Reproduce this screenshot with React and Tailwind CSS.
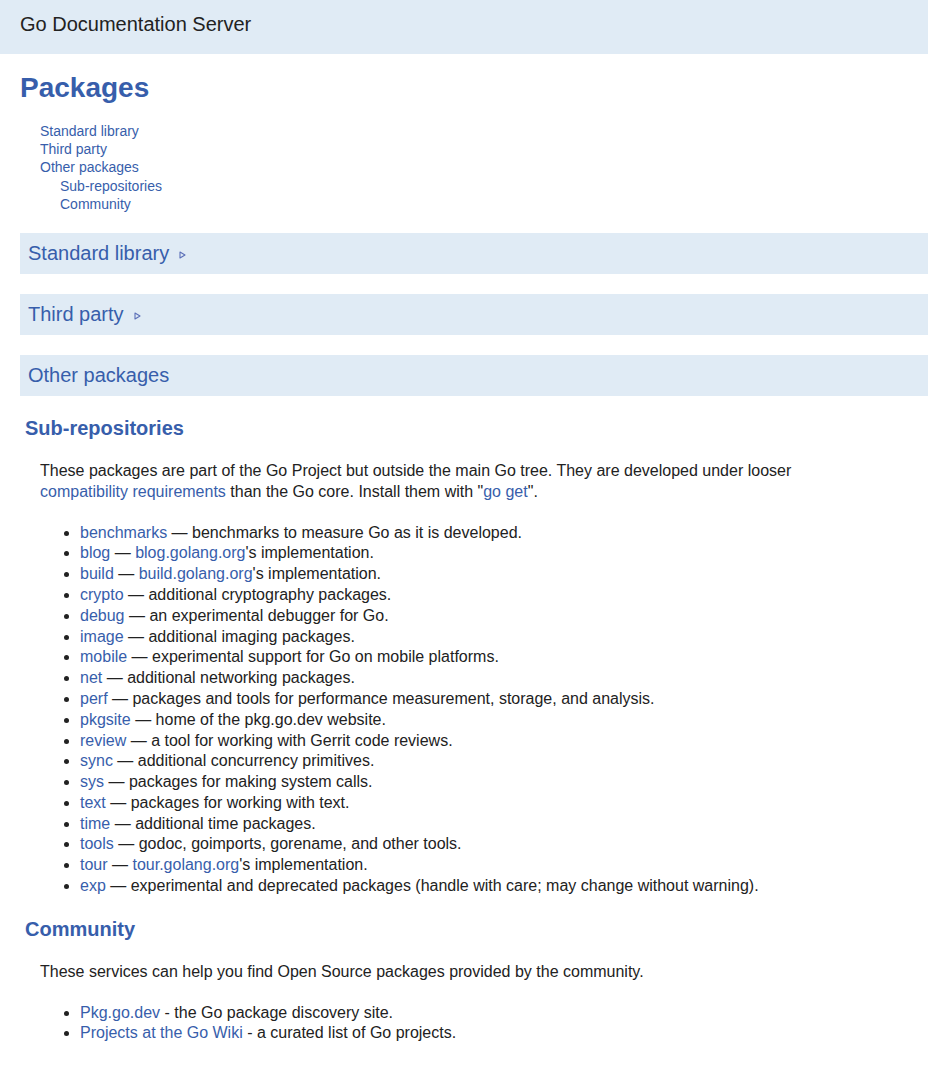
import React from 'react';

const subRepos = [
  ['benchmarks', ' — benchmarks to measure Go as it is developed.'],
  ['blog', ' — ', 'blog.golang.org', "'s implementation."],
  ['build', ' — ', 'build.golang.org', "'s implementation."],
  ['crypto', ' — additional cryptography packages.'],
  ['debug', ' — an experimental debugger for Go.'],
  ['image', ' — additional imaging packages.'],
  ['mobile', ' — experimental support for Go on mobile platforms.'],
  ['net', ' — additional networking packages.'],
  ['perf', ' — packages and tools for performance measurement, storage, and analysis.'],
  ['pkgsite', ' — home of the pkg.go.dev website.'],
  ['review', ' — a tool for working with Gerrit code reviews.'],
  ['sync', ' — additional concurrency primitives.'],
  ['sys', ' — packages for making system calls.'],
  ['text', ' — packages for working with text.'],
  ['time', ' — additional time packages.'],
  ['tools', ' — godoc, goimports, gorename, and other tools.'],
  ['tour', ' — ', 'tour.golang.org', "'s implementation."],
  ['exp', ' — experimental and deprecated packages (handle with care; may change without warning).'],
];

function Link({ children }) {
  return <a href="#" className="text-[#375EAB] no-underline">{children}</a>;
}

function Toggle() {
  return (
    <svg className="inline-block ml-[10px] align-middle" width="7" height="8" viewBox="0 0 7 8">
      <path d="M1 1 L6 4 L1 7 Z" fill="none" stroke="#5b6fb8" strokeWidth="1.1" strokeLinejoin="round" />
    </svg>
  );
}

function Section({ title, toggle }) {
  return (
    <h2 className="mt-5 p-2 bg-[#E0EBF5] text-[#375EAB] text-[20px] leading-[1.25] font-normal">
      {title}
      {toggle && <Toggle />}
    </h2>
  );
}

export default function App() {
  return (
    <div className="min-h-screen bg-white text-[#222] leading-[1.3]" style={{ fontFamily: '"Liberation Sans", Arial, sans-serif' }}>
      {/* top bar */}
      <div className="h-[54px] bg-[#E0EBF5] pl-5 pt-[12px]">
        <span className="block text-[20px] leading-[24px] text-[#222]">Go Documentation Server</span>
      </div>

      <div className="pl-5">
        <h1 className="my-5 text-[28px] leading-none font-bold text-[#375EAB]">Packages</h1>

        {/* table of contents */}
        <div className="pl-5 text-[14px] leading-[1.3]">
          <div><Link>Standard library</Link></div>
          <div><Link>Third party</Link></div>
          <div><Link>Other packages</Link></div>
          <div className="pl-5"><Link>Sub-repositories</Link></div>
          <div className="pl-5"><Link>Community</Link></div>
        </div>

        <Section title="Standard library" toggle />
        <Section title="Third party" toggle />
        <Section title="Other packages" />

        <h3 className="mt-5 mx-[5px] text-[20px] leading-[25px] font-bold text-[#375EAB]">Sub-repositories</h3>
        <div className="pl-5 text-[16px] leading-[1.3]">
          <p className="my-5 max-w-[820px]">
            These packages are part of the Go Project but outside the main Go tree. They are developed under looser{' '}
            <Link>compatibility requirements</Link> than the Go core. Install them with "<Link>go get</Link>".
          </p>
          <ul className="mb-5 pl-10 list-disc">
            {subRepos.map(([name, a, link, b]) => (
              <li key={name}>
                <Link>{name}</Link>
                {a}
                {link && <Link>{link}</Link>}
                {b}
              </li>
            ))}
          </ul>
        </div>

        <h3 className="mt-5 mx-[5px] text-[20px] leading-[25px] font-bold text-[#375EAB]">Community</h3>
        <div className="pl-5 text-[16px] leading-[1.3]">
          <p className="my-5">These services can help you find Open Source packages provided by the community.</p>
          <ul className="mb-5 pl-10 list-disc">
            <li><Link>Pkg.go.dev</Link> - the Go package discovery site.</li>
            <li><Link>Projects at the Go Wiki</Link> - a curated list of Go projects.</li>
          </ul>
        </div>
      </div>
    </div>
  );
}
